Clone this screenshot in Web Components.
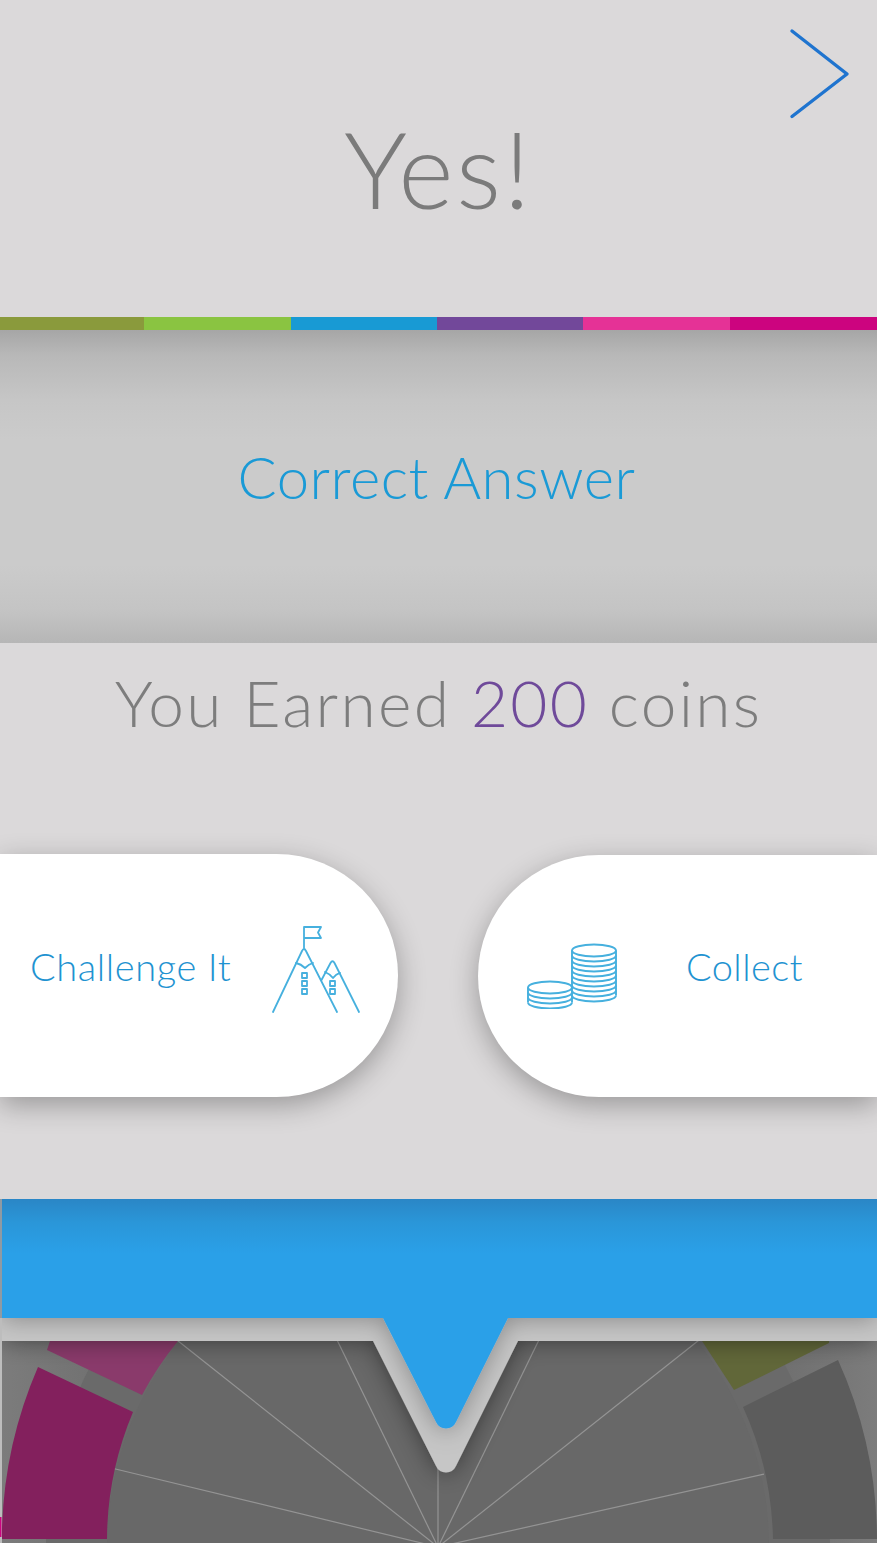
<!doctype html>
<html>
<head>
<meta charset="utf-8">
<style>
    html, body { margin: 0; padding: 0; background: #dbd9da; }
    body { width: 877px; height: 1543px; overflow: hidden; font-family: "Lato", "Liberation Sans", sans-serif; font-weight: 300; }
</style>
</head>
<body>
<quiz-result>
    <result-header>Yes!</result-header>
    <color-strip></color-strip>
    <answer-band>Correct Answer</answer-band>
    <earned-line amount="200"></earned-line>
    <action-row>
        <pill-button side="left" label="Challenge It" icon="mountain"></pill-button>
        <pill-button side="right" label="Collect" icon="coins"></pill-button>
    </action-row>
    <wheel-peek></wheel-peek>
</quiz-result>

<template id="quiz-result">
    <style>
        :host { display: flex; flex-direction: column; width: 877px; height: 1543px; background: #dbd9da; }
    </style>
    <slot></slot>
</template>

<script type="text/javascript">
    function makeShadow(el, html) {
        var shadow = el.attachShadow({mode: 'open'});
        shadow.innerHTML = html;
        return shadow;
    }

    class QuizResult extends HTMLElement {
        constructor() {
            super();
            var shadow = this.attachShadow({mode: 'open'});
            shadow.appendChild(document.getElementById('quiz-result').content.cloneNode(true));
        }
    }

    class ResultHeader extends HTMLElement {
        constructor() {
            super();
            makeShadow(this, `
            <style>
                :host { display: flex; height: 317px; justify-content: center; position: relative; color: #7b7b7b; }
                .title { font-size: 106px; line-height: 130px; margin-top: 103px; font-weight: 300; letter-spacing: 2.5px; }
                svg { position: absolute; left: 788px; top: 27px; }
            </style>
            <div class="title"><slot></slot></div>
            <svg width="64" height="94" viewBox="0 0 64 94" fill="none">
                <path d="M4 4 L59 47 L4 89.5" stroke="#1f74cf" stroke-width="3.4" stroke-linecap="round" stroke-linejoin="round"/>
            </svg>`);
        }
    }

    class ColorStrip extends HTMLElement {
        constructor() {
            super();
            makeShadow(this, `
            <style>
                :host { display: grid; grid-template-columns: 144px 147px 146px 146px 147px 147px; height: 13px; }
            </style>
            <div style="background:#8a9a3c"></div>
            <div style="background:#8ac441"></div>
            <div style="background:#189ad4"></div>
            <div style="background:#72489a"></div>
            <div style="background:#e53296"></div>
            <div style="background:#cc047f"></div>`);
        }
    }

    class AnswerBand extends HTMLElement {
        constructor() {
            super();
            makeShadow(this, `
            <style>
                :host {
                    display: flex; height: 313px; align-items: center; justify-content: center;
                    color: #1a9ad6; font-size: 58px; letter-spacing: .5px;
                    background: linear-gradient(180deg, #a6a6a6 0, #b8b8b8 25px, #c6c6c6 70px, #cbcbcb 110px, #cbcbcb 235px, #c4c4c4 280px, #b6b6b6 313px);
                }
                span { margin: -20px 4px 0 0; }
            </style>
            <span><slot></slot></span>`);
        }
    }

    class EarnedLine extends HTMLElement {
        constructor() {
            super();
            makeShadow(this, `
            <style>
                :host { display: block; text-align: center; height: 211px; color: #7d7d7d; font-size: 64px; line-height: 76px; padding-top: 22px; box-sizing: border-box; letter-spacing: 2.3px; white-space: nowrap; }
                b { font-weight: 300; color: #6f4a9a; }
            </style>
            You Earned <b>${this.getAttribute('amount')}</b> coins`);
        }
    }

    class ActionRow extends HTMLElement {
        constructor() {
            super();
            makeShadow(this, `
            <style>
                :host { display: flex; justify-content: space-between; align-items: flex-start; flex: none; height: 243px; }
            </style>
            <slot></slot>`);
        }
    }

    function coinsIcon() {
        var rings = '';
        for (var k = 1; k <= 9; k++) {
            rings += `M45 ${7.5 + 5 * k} A22 6 0 0 0 89 ${7.5 + 5 * k} `;
        }
        for (var j = 1; j <= 3; j++) {
            rings += `M1 ${44.5 + 5 * j} A22 6 0 0 0 45 ${44.5 + 5 * j} `;
        }
        return `<svg width="92" height="66" viewBox="0 0 92 66" fill="none" stroke="#46b0de" stroke-width="1.9">
            <ellipse cx="67" cy="7.5" rx="22" ry="6"/>
            <path d="M45 7.5 V52.5 M89 7.5 V52.5 M1 44.5 V59.5 M45 44.5 V59.5"/>
            <path d="${rings}"/>
            <ellipse cx="23" cy="44.5" rx="22" ry="6"/>
        </svg>`;
    }

    var ICONS = {
        mountain: `<svg class="peak" width="90" height="90" viewBox="0 0 90 90" fill="none" stroke="#46b0de" stroke-width="1.8" stroke-linecap="round" stroke-linejoin="round">
            <path d="M1 87 L30 26 Q32 22 34 26 L65 87"/>
            <path d="M32 23 V2 H49 L46 7.5 L49 13 H32"/>
            <path d="M24 38 Q29 39 33 43 Q37 39 41 38"/>
            <path d="M49.5 55 L58.5 38 Q60.5 34.5 62.5 38 L87 87"/>
            <path d="M53 47 Q58 49 61 53 Q64 49 68 48"/>
            <path d="M30 48h5v5h-5z M30 56h5v5h-5z M30 64h5v5h-5z M58 56h5v5h-5z M58 64h5v5h-5z"/>
        </svg>`,
        coins: coinsIcon()
    };

    class PillButton extends HTMLElement {
        constructor() {
            super();
            var side = this.getAttribute('side');
            var label = this.getAttribute('label');
            var icon = ICONS[this.getAttribute('icon')];
            var inner = side == 'left'
                ? `<span class="label">${label}</span>${icon}`
                : `${icon}<span class="label">${label}</span>`;
            makeShadow(this, `
            <style>
                :host { display: block; background: #fff; box-sizing: border-box; box-shadow: 0 8px 28px rgba(0,0,0,.3); }
                :host([side=left]) { width: 397.5px; height: 243px; border-radius: 0 122px 122px 0; }
                :host([side=right]) { width: 399px; height: 242px; margin-top: 1px; border-radius: 121px 0 0 121px; }
                .row { display: flex; height: 100%; align-items: center; color: #1f93d1; font-size: 38px; letter-spacing: .6px; }
                :host([side=left]) .row { padding: 0 36px 0 30px; justify-content: space-between; }
                :host([side=right]) .row { padding: 0 0 0 49px; gap: 67px; letter-spacing: .4px; }
                .label { margin-top: -20px; white-space: nowrap; }
                svg { flex: none; }
                svg.peak { margin-top: -12px; }
            </style>
            <div class="row">${inner}</div>`);
        }
    }

    class WheelPeek extends HTMLElement {
        constructor() {
            super();
            var cx = 438, cy = 1547 - 1199;
            var spokes = [12.6, 38.4, 64, 90, 116, 141.6, 166.4].map(function (deg) {
                var a = deg * Math.PI / 180;
                return `<line x1="${cx}" y1="${cy}" x2="${cx + 334 * Math.cos(a)}" y2="${cy - 334 * Math.sin(a)}"/>`;
            }).join('');
            makeShadow(this, `
            <style>
                :host { display: block; flex: none; margin-top: 102px; width: 877px; height: 344px; background: #bdbdbd; }
                svg { display: block; }
            </style>
            <svg width="877" height="344" viewBox="0 0 877 344">
                <defs>
                    <linearGradient id="outer" x1="0" x2="1" y1="0" y2="0">
                        <stop offset="0" stop-color="#7c7c7c"/><stop offset="0.12" stop-color="#707070"/>
                        <stop offset="0.88" stop-color="#6e6e6e"/><stop offset="1" stop-color="#7c7c7c"/>
                    </linearGradient>
                    <linearGradient id="blue" x1="0" x2="0" y1="0" y2="1">
                        <stop offset="0" stop-color="#2a86c6"/><stop offset="0.1" stop-color="#2a96d8"/>
                        <stop offset="0.24" stop-color="#2ca0e8"/><stop offset="1" stop-color="#2ca0e8"/>
                    </linearGradient>
                    <filter id="soft" x="-10%" y="-20%" width="120%" height="140%">
                        <feDropShadow dx="0" dy="0" stdDeviation="12" flood-color="#000" flood-opacity=".45"/>
                    </filter>
                    <filter id="soft2" x="-10%" y="-20%" width="120%" height="140%">
                        <feDropShadow dx="0" dy="2" stdDeviation="12" flood-color="#000" flood-opacity=".3"/>
                    </filter>
                    <clipPath id="frame"><rect x="2" y="0" width="875" height="344"/></clipPath>
                </defs>
                <rect x="0" y="0" width="2" height="119" fill="#8f9aa3"/>
                <rect x="0" y="318" width="1.5" height="20" fill="#cc047f"/>
                <g clip-path="url(#frame)">
                    <rect x="2" y="120" width="875" height="224" fill="url(#outer)"/>
                    <circle cx="${cx}" cy="${cy}" r="392" fill="#6a6a6a"/>
                    <path d="M47 151 L142 196 A332 332 0 0 1 178 142 L50 142 Z" fill="#8a3a6b"/>
                    <path d="M734 191 L829 144 L829 142 L702 142 Z" fill="#616739"/>
                    <circle cx="${cx}" cy="${cy}" r="331" fill="#686868"/>
                    <g stroke="#949494" stroke-width="1.2">${spokes}</g>
                    <path d="M38 168 L133 213 A332 332 0 0 0 107 340 L2 340 L2 330 A438 438 0 0 1 38 168 Z" fill="#83205d"/>
                    <path d="M743 208 L838 161 A438 438 0 0 1 877 340 L773 340 A332 332 0 0 0 743 208 Z" fill="#5c5c5c"/>
                    <path d="M2 110 H877 V142 H518 L456 267 A11 11 0 0 1 436 267 L373 142 H2 Z" fill="#c6c6c6" filter="url(#soft)"/>
                    <path d="M2 0 H877 V119 H508 L456 223 A11 11 0 0 1 436 223 L383 119 H2 Z" fill="url(#blue)" filter="url(#soft2)"/>
                </g>
            </svg>`);
        }
    }

    customElements.define('quiz-result', QuizResult);
    customElements.define('result-header', ResultHeader);
    customElements.define('color-strip', ColorStrip);
    customElements.define('answer-band', AnswerBand);
    customElements.define('earned-line', EarnedLine);
    customElements.define('action-row', ActionRow);
    customElements.define('pill-button', PillButton);
    customElements.define('wheel-peek', WheelPeek);
</script>
</body>
</html>
